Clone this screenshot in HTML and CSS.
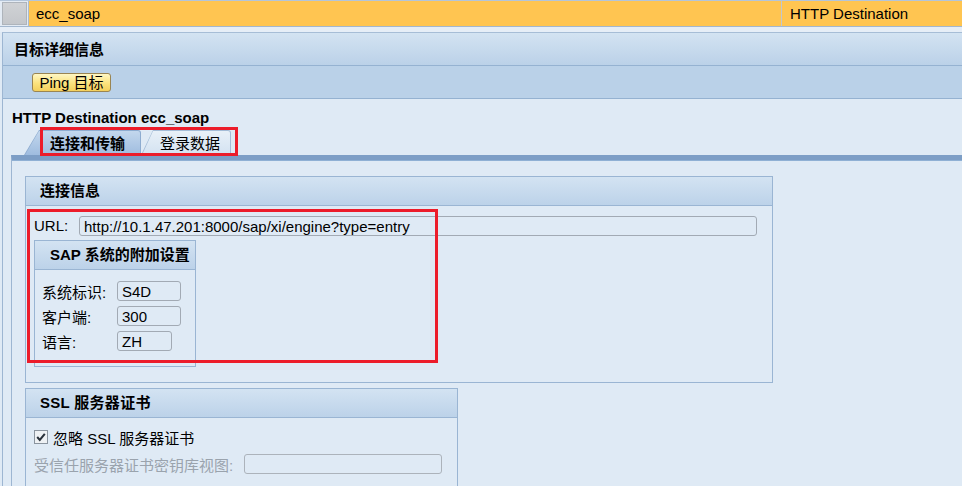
FILE: index.html
```html
<!DOCTYPE html>
<html lang="zh">
<head>
<meta charset="utf-8">
<link rel="stylesheet" href="styles.css">
</head>
<body>
<div class="page">
  <div class="toprow">
    <div class="selcell"><div class="selbox"></div></div>
    <div class="namecell">ecc_soap</div>
    <div class="typecell">HTTP Destination</div>
  </div>
  <div class="gap"></div>
  <div class="detail">
    <div class="dhead">目标详细信息</div>
    <div class="dtool"><button class="btn">Ping 目标</button></div>
    <div class="dbody">
      <div class="title">HTTP Destination ecc_soap</div>
      <div class="tabs">
        <div class="tab tab-on"><div class="tab-in">连接和传输</div></div>
        <div class="tab tab-off"><div class="tab-in">登录数据</div></div>
      </div>
      <div class="tabpanel">
        <div class="panel conn">
          <div class="phead">连接信息</div>
          <div class="pbody">
            <div class="urlrow">
              <span class="lbl">URL:</span>
              <div class="field url">http://10.1.47.201:8000/sap/xi/engine?type=entry</div>
            </div>
            <div class="panel sap">
              <div class="phead sub">SAP 系统的附加设置</div>
              <div class="sapbody">
                <div class="frow"><span class="flbl">系统标识:</span><div class="field f64">S4D</div></div>
                <div class="frow"><span class="flbl">客户端:</span><div class="field f64">300</div></div>
                <div class="frow"><span class="flbl">语言:</span><div class="field f55">ZH</div></div>
              </div>
            </div>
          </div>
        </div>
        <div class="panel ssl">
          <div class="phead ssl-head">SSL 服务器证书</div>
          <div class="sslbody">
            <div class="chkrow">
              <svg class="chk" width="14" height="14" viewBox="0 0 14 14"><rect x="0.5" y="0.5" width="13" height="13" fill="#eef1f4" stroke="#8a949f"/><path d="M3.2 7 L5.8 10 L10.8 3.8" fill="none" stroke="#28303a" stroke-width="2"/></svg>
              <span>忽略 SSL 服务器证书</span>
            </div>
            <div class="keyrow">
              <span class="gray">受信任服务器证书密钥库视图:</span>
              <div class="field dis"></div>
            </div>
          </div>
        </div>
      </div>
    </div>
  </div>
  <div class="mark mark1"></div>
  <div class="mark mark2"></div>
</div>
</body>
</html>
```
FILE: styles.css
```css
* { box-sizing: border-box; }
html, body { margin: 0; padding: 0; }
body {
  width: 962px;
  height: 486px;
  overflow: hidden;
  background: #dfeaf5;
  font-family: "Liberation Sans", "Noto Sans CJK SC", Arial, sans-serif;
  font-size: 15px;
  color: #000;
}
.page { position: relative; width: 962px; height: 486px; }

.toprow {
  display: flex;
  height: 27px;
  border-top: 1px solid #b4c5d9;
  border-bottom: 1px solid #a3b7ce;
  background: #ffc551;
}
.selcell {
  width: 29px;
  background: #e3ebf4;
  border-right: 1px solid #aabcd1;
  padding: 1px 1px 0 2px;
}
.selbox {
  width: 25px;
  height: 23px;
  background: linear-gradient(#d0d2d5, #c4c7cb);
  border: 1px solid #aeb4bb;
}
.namecell {
  width: 753px;
  padding-left: 7px;
  line-height: 25px;
  border-right: 1px solid #c0c6cf;
}
.typecell {
  flex: 1;
  padding-left: 8px;
  line-height: 25px;
}
.gap { height: 5px; background: #e6eef7; }

.detail {
  margin-left: 2px;
  border-left: 1px solid #9db6d2;
  border-top: 1px solid #a6bdd6;
}
.dhead {
  height: 33px;
  padding-left: 11px;
  line-height: 33px;
  font-weight: bold;
  background: linear-gradient(#d3e3f2, #bbd1e8);
  border-bottom: 1px solid #95b2d1;
}
.dtool {
  height: 33px;
  padding: 7px 0 0 29px;
  background: #bad1e8;
  border-bottom: 1px solid #95b2d1;
}
.btn {
  height: 19px;
  width: 79px;
  padding: 0;
  font: 15px "Liberation Sans", "Noto Sans CJK SC", sans-serif;
  line-height: 16px;
  color: #000;
  background: linear-gradient(#fff7c4, #fbe27d 55%, #f3cf5c);
  border: 1px solid #9a8552;
  border-radius: 3px;
}
.dbody { padding: 10px 0 0 8px; }
.title {
  font-weight: bold;
  line-height: 18px;
  padding-left: 1px;
  height: 21px;
}
.tabs {
  display: flex;
  height: 25px;
  padding-left: 13px;
}
.tab {
  height: 25px;
  padding: 1px 1px 0 1px;
  background: #8eacd0;
  border-top-right-radius: 3px;
}
.tab-on { width: 117px; clip-path: polygon(0 100%, 15px 0, 100% 0, 100% 100%); }
.tab-off { width: 90px; clip-path: polygon(0 100%, 12px 0, 100% 0, 100% 100%); background: #a4bcd7; }
.tab-in {
  height: 24px;
  line-height: 25px;
  border-top-right-radius: 2px;
}
.tab-on .tab-in {
  clip-path: polygon(0 100%, 14px 0, 100% 0, 100% 100%);
  background: linear-gradient(#c3d7ed, #9fbcdf);
  font-weight: bold;
  padding-left: 25px;
}
.tab-off .tab-in {
  clip-path: polygon(0 100%, 11px 0, 100% 0, 100% 100%);
  background: linear-gradient(#e8f0f8, #d3e2f1);
  padding-left: 18px;
}

.tabpanel {
  border-top: 5px solid #7d9ec6;
  border-left: 1px solid #9db6d2;
  padding: 16px 0 0 13px;
  height: 340px;
  box-shadow: inset 0 1px 0 #8fb0d4;
}
.panel {
  border: 1px solid #9ab5d3;
  background: #dfeaf5;
}
.phead {
  height: 29px;
  line-height: 28px;
  padding-left: 14px;
  font-weight: bold;
  background: linear-gradient(#d3e3f2, #bcd2e9);
  border-bottom: 1px solid #9ab5d3;
}
.ssl-head { letter-spacing: 0.3px; }
.conn { width: 748px; height: 207px; }
.pbody { padding: 9px 0 0 8px; }
.urlrow { display: flex; align-items: center; height: 21px; }
.lbl { width: 45px; }
.field {
  height: 20px;
  line-height: 19px;
  padding-left: 4px;
  border: 1px solid #a2aab4;
  border-radius: 3px;
  background: #dfeaf5;
}
.url { width: 678px; }
.sap { width: 162px; height: 127px; margin-top: 4px; }
.sub { padding-left: 15px; }
.sapbody { padding: 11px 0 0 7px; }
.frow { display: flex; align-items: center; height: 20px; margin-bottom: 5px; }
.flbl { width: 75px; }
.f64 { width: 64px; }
.f55 { width: 55px; }

.ssl { width: 433px; height: 110px; margin-top: 5px; }
.sslbody { padding: 12px 0 0 8px; }
.chkrow { display: flex; align-items: center; height: 14px; gap: 5px; }
.chk { display: block; }
.keyrow { display: flex; align-items: center; margin-top: 10px; height: 20px; }
.gray { color: #9aa3ad; width: 210px; }
.dis { width: 198px; border-color: #acb3bb; }

.mark {
  position: absolute;
  border: 3px solid #ec1c2a;
}
.mark1 { left: 40px; top: 127px; width: 198px; height: 29px; }
.mark2 { left: 27px; top: 209px; width: 411px; height: 154px; }
```
